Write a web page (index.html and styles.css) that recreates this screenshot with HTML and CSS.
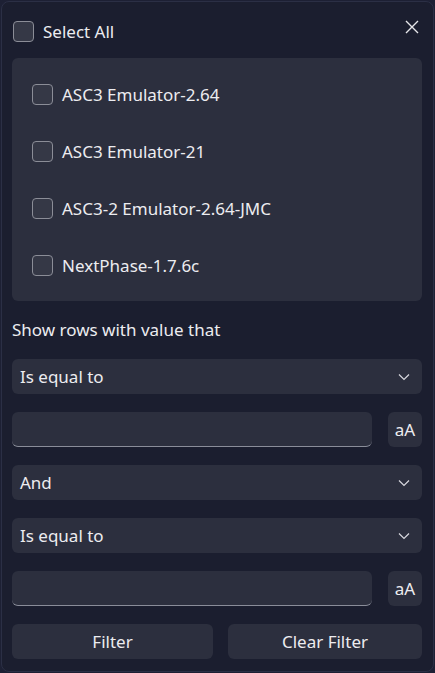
FILE: index.html
```html
<!DOCTYPE html>
<html lang="en">
<head>
    <meta charset="UTF-8">
    <meta name="viewport" content="width=device-width, initial-scale=1.0">
    <title>Filter</title>
    <link rel="stylesheet" href="styles.css">
</head>
<body>

<div class="panel">
    <!-- Header -->
    <div class="header">
        <label class="check">
            <span class="box"></span>
            <span>Select All</span>
        </label>
        <span class="close">
            <svg width="14" height="14" viewBox="0 0 14 14"><path d="M1 1L13 13M13 1L1 13" stroke="#e6e6ea" stroke-width="1.4" fill="none"/></svg>
        </span>
    </div>

    <!-- Values -->
    <div class="values">
        <label class="check row"><span class="box"></span><span>ASC3 Emulator-2.64</span></label>
        <label class="check row"><span class="box"></span><span>ASC3 Emulator-21</span></label>
        <label class="check row"><span class="box"></span><span>ASC3-2 Emulator-2.64-JMC</span></label>
        <label class="check row"><span class="box"></span><span>NextPhase-1.7.6c</span></label>
    </div>

    <div class="caption">Show rows with value that</div>

    <div class="form">
        <div class="select">
            <span>Is equal to</span>
            <svg width="12" height="8" viewBox="0 0 12 8"><path d="M1 1.5L6 6.5L11 1.5" stroke="#d8d8de" stroke-width="1.2" fill="none"/></svg>
        </div>
        <div class="input-row">
            <div class="input"></div>
            <div class="case">aA</div>
        </div>
        <div class="select">
            <span>And</span>
            <svg width="12" height="8" viewBox="0 0 12 8"><path d="M1 1.5L6 6.5L11 1.5" stroke="#d8d8de" stroke-width="1.2" fill="none"/></svg>
        </div>
        <div class="select">
            <span>Is equal to</span>
            <svg width="12" height="8" viewBox="0 0 12 8"><path d="M1 1.5L6 6.5L11 1.5" stroke="#d8d8de" stroke-width="1.2" fill="none"/></svg>
        </div>
        <div class="input-row">
            <div class="input"></div>
            <div class="case">aA</div>
        </div>
        <div class="buttons">
            <div class="btn">Filter</div>
            <div class="btn">Clear Filter</div>
        </div>
    </div>
</div>

</body>
</html>
```

FILE: styles.css
```css
* {
    box-sizing: border-box;
}

body {
    margin: 0;
    background-color: #1d2034;
    font-family: "Noto Sans", "Open Sans", sans-serif;
    font-size: 17px;
    color: #ececf0;
}

.panel {
    margin: 1px;
    width: 433px;
    height: 671px;
    border: 1px solid #2b2f45;
    border-radius: 8px;
    background-color: #1b1e2f;
    padding: 10px 11px 0 10px;
}

.header {
    display: flex;
    justify-content: space-between;
    align-items: center;
    height: 38px;
    padding-right: 3px;
}

.close {
    display: flex;
    margin-top: -8px;
}

.check {
    display: flex;
    align-items: center;
    gap: 9px;
    padding-left: 1px;
}

.box {
    width: 21px;
    height: 21px;
    border: 1px solid #8b8d97;
    border-radius: 4px;
    background-color: #353846;
}

.values {
    margin-top: 8px;
    height: 243px;
    background-color: #2c2f3e;
    border-radius: 6px;
    padding: 8px 20px 7px 19px;
}

.row {
    height: 57px;
}

.caption {
    margin-top: 19px;
    height: 20px;
    line-height: 20px;
}

.form {
    display: flex;
    flex-direction: column;
    gap: 18px;
    margin-top: 19px;
}

.select {
    height: 35px;
    display: flex;
    justify-content: space-between;
    align-items: center;
    background-color: #2c2f3e;
    border-radius: 6px;
    padding: 0 12px 0 8px;
}

.input-row {
    display: flex;
    justify-content: space-between;
    height: 35px;
}

.input {
    width: 360px;
    background-color: #2c2f3e;
    border-radius: 6px;
    border-bottom: 1px solid #8a8d99;
}

.case {
    width: 34px;
    background-color: #2c2f3e;
    border-radius: 6px;
    display: flex;
    align-items: center;
    justify-content: center;
}

.buttons {
    display: grid;
    grid-template-columns: 201px 1fr;
    gap: 15px;
    height: 35px;
}

.btn {
    background-color: #2c2f3e;
    border-radius: 6px;
    display: flex;
    align-items: center;
    justify-content: center;
}
```
